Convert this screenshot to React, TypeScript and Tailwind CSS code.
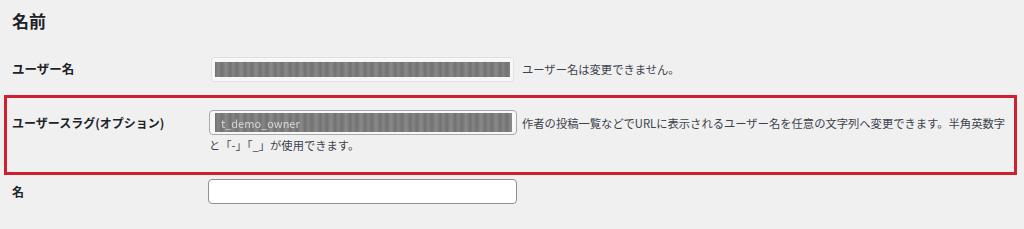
const font = { fontFamily: '"Noto Sans CJK JP", "Noto Sans", sans-serif' };

const Redacted = ({ className, label }: { className: string; label?: string }) => (
	<div
		className={`overflow-hidden bg-[#7a7a7a] bg-[repeating-linear-gradient(90deg,#6f6f6f_0px,#858585_3px,#727272_7px,#8a8a8a_11px,#747474_15px)] ${className}`}
	>
		{label && (
			<span className="ml-[6px] text-[11px] leading-[19px] text-[#d8d8d8] blur-[0.6px]">
				{label}
			</span>
		)}
	</div>
);

const App = () => {
	return (
		<div
			className="min-h-[229px] w-[1024px] bg-[#f0f0f1] pt-[11px] text-[#1d2327]"
			style={font}
		>
			<h2 className="pl-[12px] text-[17px] leading-[20px] font-bold">名前</h2>

			<div className="mt-[26px] flex h-[25px] items-center pl-[12px]">
				<label className="w-[199px] shrink-0 text-[12.5px] font-bold">ユーザー名</label>
				<div className="flex h-[25px] w-[303px] shrink-0 items-center rounded-[3px] border border-[#e2e2e4] bg-[#f6f7f7] px-[3px]">
					<Redacted className="h-[15px] w-full" />
				</div>
				<span className="ml-[8px] text-[11.3px] text-[#3c434a]">
					ユーザー名は変更できません。
				</span>
			</div>

			<div className="mt-[13px] ml-[4px] w-[1013px] h-[80px] border-[3px] border-[#cf2030] pt-[12px] pl-[5px]">
				<div className="flex items-start">
					<label className="w-[197px] shrink-0 text-[12px] leading-[25px] font-bold">
						ユーザースラグ(オプション)
					</label>
					<div className="min-w-0 flex-1 text-[11.3px] leading-[20px] text-[#3c434a]">
						<div className="flex items-center">
							<div className="flex h-[25px] w-[308px] shrink-0 items-center rounded-[4px] border border-[#a7aaad] bg-[#f6f7f7] pl-[5px] pr-[4px]">
								<Redacted className="h-[19px] w-full" label="t_demo_owner" />
							</div>
							<span className="ml-[5px] whitespace-nowrap">
								作者の投稿一覧などでURLに表示されるユーザー名を任意の文字列へ変更できます。半角英数字
							</span>
						</div>
						<p>と「-」「_」が使用できます。</p>
					</div>
				</div>
			</div>

			<div className="mt-[4px] flex h-[25px] items-center pl-[12px]">
				<label className="w-[196px] shrink-0 text-[12px] font-bold">名</label>
				<input
					type="text"
					className="h-[25px] w-[309px] rounded-[4px] border border-[#8c8f94] bg-white px-2 text-[12px] outline-none"
				/>
			</div>
		</div>
	);
};

export default App;
